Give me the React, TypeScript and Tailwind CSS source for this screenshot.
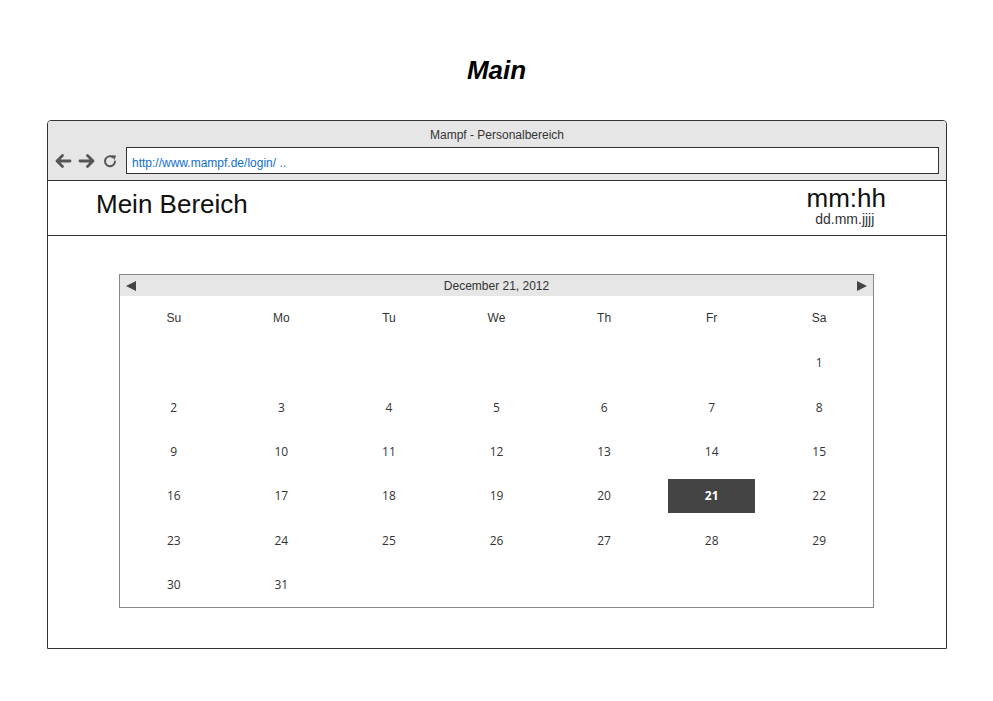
import React from "react";

const days = ["Su", "Mo", "Tu", "We", "Th", "Fr", "Sa"];

// December 2012 starts on Saturday
const cells: (number | null)[] = [
  ...Array(6).fill(null),
  ...Array.from({ length: 31 }, (_, i) => i + 1),
];
while (cells.length < 42) cells.push(null);

function Arrow({ flip }: { flip?: boolean }) {
  return (
    <svg width="18" height="16" viewBox="0 0 18 16" className={flip ? "-scale-x-100" : ""}>
      <path
        d="M16 8H3M8.5 2.5 3 8l5.5 5.5"
        fill="none"
        stroke="#555"
        strokeWidth="2.8"
        strokeLinecap="round"
        strokeLinejoin="round"
      />
    </svg>
  );
}

function Reload() {
  return (
    <svg width="16" height="16" viewBox="0 0 16 16">
      <path
        d="M13 8.5A5 5 0 1 1 11 4.2"
        fill="none"
        stroke="#555"
        strokeWidth="2"
        strokeLinecap="round"
      />
      <path d="M9.2 2.2 14 2.6 12.6 7Z" fill="#555" />
    </svg>
  );
}

export default function App() {
  return (
    <div className="h-[701px] w-[993px] bg-white font-['Liberation_Sans',Arial,sans-serif] text-[#222]">
      <div className="pt-[55px] text-center text-[26px] leading-[30px] font-bold italic text-black">
        Main
      </div>

      {/* browser window */}
      <div className="mx-[47px] mt-[35px] h-[529px] w-[900px] rounded-t-[4px] border border-[#333]">
        <div className="h-[60px] rounded-t-[3px] border-b border-[#333] bg-[#e6e6e6]">
          <div className="pt-[7px] text-center text-[12px] leading-[14px] text-[#333]">
            Mampf - Personalbereich
          </div>
          <div className="mt-[5px] flex items-center pl-[6px] pr-[6px]">
            <div className="flex items-center gap-[6px]">
              <Arrow />
              <Arrow flip />
              <Reload />
            </div>
            <div className="ml-[8px] mr-[1px] flex h-[27px] flex-1 items-center border border-[#333] bg-white pl-[5px] pt-[4px] text-[12px] text-[#0f6fcf]">
              http://www.mampf.de/login/ ..
            </div>
          </div>
        </div>

        <div className="flex h-[55px] items-start justify-between border-b border-[#333] pl-[48px] pr-[60px]">
          <div className="pt-[8px] text-[26px] leading-[30px] text-[#111]">Mein Bereich</div>
          <div className="pt-[4px] text-center">
            <div className="text-[26px] leading-[26px] text-[#111]">mm:hh</div>
            <div className="mt-[1px] pr-[3px] text-[14px] leading-[14px] text-[#333]">dd.mm.jjjj</div>
          </div>
        </div>

        {/* calendar */}
        <div className="mx-[71px] mt-[38px] w-[755px] border border-[#888]">
          <div className="flex h-[21px] items-center justify-between bg-[#e6e6e6] px-[5px]">
            <svg width="12" height="12" viewBox="0 0 12 12">
              <path d="M1 6 11 1v10Z" fill="#444" />
            </svg>
            <span className="text-[12px] leading-[14px] text-[#333]">December 21, 2012</span>
            <svg width="12" height="12" viewBox="0 0 12 12">
              <path d="M11 6 1 1v10Z" fill="#444" />
            </svg>
          </div>
          <div className="grid h-[311px] grid-cols-7 grid-rows-7">
            {days.map((d) => (
              <div key={d} className="flex items-center justify-center text-[12px] text-[#333]">
                {d}
              </div>
            ))}
            {cells.map((n, i) => (
              <div key={i} className="flex items-center justify-center px-[10px] py-[5px]">
                {n !== null && (
                  <div
                    className={`flex h-full w-full items-center justify-center pt-[1px] font-['Open_Sans',sans-serif] text-[12px] ${
                      n === 21 ? "bg-[#444] font-bold text-white" : "text-[#333]"
                    }`}
                  >
                    {n}
                  </div>
                )}
              </div>
            ))}
          </div>
        </div>
      </div>
    </div>
  );
}
